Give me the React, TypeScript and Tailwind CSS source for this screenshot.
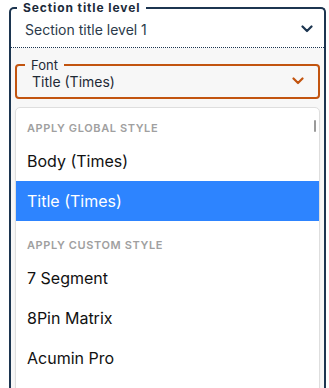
import React from "react";

const Chevron = ({ color }: { color: string }) => (
  <svg width="12" height="8" viewBox="0 0 12 8" fill="none">
    <path d="M1.5 1.5 L6 6 L10.5 1.5" stroke={color} strokeWidth="2.2" strokeLinecap="round" strokeLinejoin="round" />
  </svg>
);

export default function App() {
  return (
    <div className="w-[329px] h-[388px] overflow-hidden bg-white" style={{ fontFamily: "Inter, 'Noto Sans', sans-serif" }}>
      <fieldset className="ml-[9px] mr-[3px] border-2 border-b-0 border-[#1c3550] rounded-t-[5px]">
        <legend className="ml-[6px] px-[6px] text-[12px] leading-[15px] font-bold tracking-[0.9px] text-[#1c2b3a]">
          Section title level
        </legend>
        <div className="flex items-center justify-between pl-[14px] pr-[11px] h-[36px] -mt-[4px]">
          <span className="text-[14px] text-[#2b3a4a]">Section title level 1</span>
          <Chevron color="#1c3550" />
        </div>
        <div className="border-t border-dotted border-[#1c3550]" />
        <div className="bg-[#f7f7f7] px-[4px] pt-[10px] h-[400px]">
          <fieldset className="border-2 border-[#c2540f] rounded-[4px] h-[41px]">
            <legend className="ml-[8px] px-[6px] text-[13px] leading-[14px] text-[#1f2a36]">Font</legend>
            <div className="flex items-center justify-between pl-[15px] pr-[14px] -mt-[2px] h-[22px]">
              <span className="text-[14px] text-[#1f2a36]">Title (Times)</span>
              <Chevron color="#c2540f" />
            </div>
          </fieldset>
          <div className="relative mt-[8px] bg-white border border-[#dedede] rounded-[5px] h-[300px] shadow-[0_1px_2px_rgba(0,0,0,0.05)]">
            <div className="absolute right-[3px] top-[12px] w-[2px] h-[12px] bg-[#9a9a9a] rounded-full" />
            <div className="h-[33px] pt-[14px] pl-[11px] text-[11px] leading-[13px] font-semibold tracking-[0.6px] text-[#a0a0a0]">
              APPLY GLOBAL STYLE
            </div>
            <div className="h-[40px] flex items-center pl-[11px] text-[16px] text-[#111]">Body (Times)</div>
            <div className="h-[40px] flex items-center pl-[11px] text-[16px] text-white bg-[#2d84ff]">Title (Times)</div>
            <div className="h-[37px] pt-[18px] pl-[11px] text-[11px] leading-[13px] font-semibold tracking-[0.6px] text-[#a0a0a0]">
              APPLY CUSTOM STYLE
            </div>
            <div className="h-[40px] flex items-center pl-[11px] text-[16px] text-[#111]">7 Segment</div>
            <div className="h-[40px] flex items-center pl-[11px] text-[16px] text-[#111]">8Pin Matrix</div>
            <div className="h-[40px] flex items-center pl-[11px] text-[16px] text-[#111]">Acumin Pro</div>
          </div>
        </div>
      </fieldset>
    </div>
  );
}
